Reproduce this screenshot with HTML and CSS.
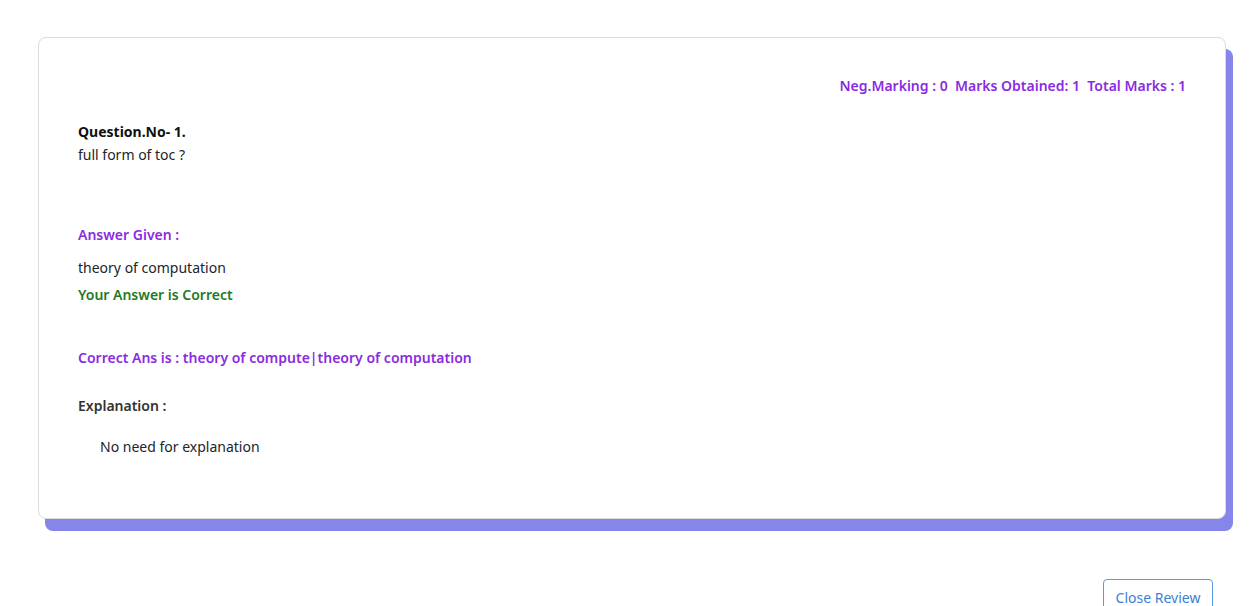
FILE: index.html
```html
<!DOCTYPE html>
<html>
<head>
<meta charset="utf-8">
<link rel="stylesheet" href="styles.css">
</head>
<body>
<div class="page">
  <div class="card">
    <div class="marks">Neg.Marking : 0&nbsp; Marks Obtained: 1&nbsp; Total Marks : 1</div>
    <div class="question">
      <div class="qno">Question.No- 1.</div>
      <div class="qtext">full form of toc ?</div>
    </div>
    <div class="label purple given">Answer Given :</div>
    <div class="answer">theory of computation</div>
    <div class="result">Your Answer is Correct</div>
    <div class="label purple correct">Correct Ans is : theory of compute|theory of computation</div>
    <div class="label expl">Explanation :</div>
    <div class="expl-text">No need for explanation</div>
  </div>
  <div class="actions">
    <button class="btn-close">Close Review</button>
  </div>
</div>
</body>
</html>
```
FILE: styles.css
```css
* { box-sizing: border-box; }
body {
  margin: 0;
  background: #fff;
  font-family: "Noto Sans", "Open Sans", sans-serif;
  font-size: 14px;
  color: #212529;
}
.page {
  padding: 37px 27px 0 38px;
}
.card {
  width: 1188px;
  border: 1px solid #dcdcdc;
  border-radius: 8px;
  background: #fff;
  box-shadow: 7px 12px 0 #8585ea;
  padding: 37px 39px 60px 39px;
  line-height: 22px;
}
.marks {
  text-align: right;
  color: #8a2be2;
  font-weight: 600;
}
.question { margin-top: 24px; }
.qno { font-weight: 700; color: #111; }
.qtext { margin-top: 1px; }
.purple { color: #8a2be2; }
.label { font-weight: 600; }
.given { margin-top: 58px; }
.answer { margin-top: 11px; }
.result { margin-top: 5px; color: #1f7a1f; font-weight: 600; }
.correct { margin-top: 41px; }
.expl { margin-top: 26px; color: #333; }
.expl-text { margin-top: 19px; padding-left: 22px; }
.actions {
  display: flex;
  justify-content: flex-end;
  padding-right: 13px;
  margin-top: 60px;
}
.btn-close {
  font-family: inherit;
  font-size: 14px;
  color: #3b7fd4;
  background: #fff;
  border: 1px solid #5a9be0;
  border-radius: 4px;
  width: 110px;
  height: 36px;
  padding: 0;
}
```
